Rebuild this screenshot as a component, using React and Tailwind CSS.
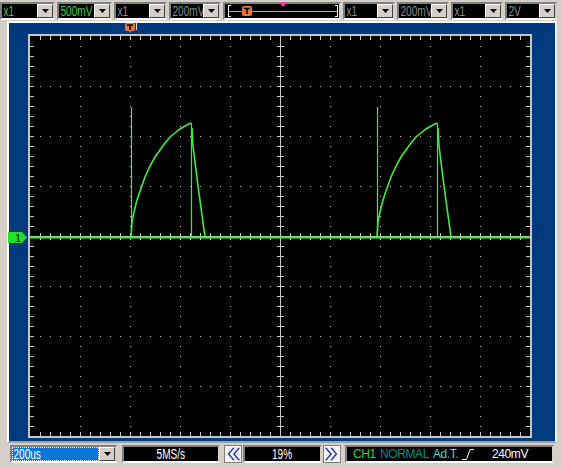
import React from 'react';

const font = { fontFamily: '"Liberation Sans", Arial, sans-serif' };

function Arrow() {
    return (
        <svg width="7" height="4" viewBox="0 0 7 4">
            <polygon points="0,0 7,0 3.5,4" fill="#000" />
        </svg>
    );
}

function Combo({ w, text, color, selected }) {
    return (
        <div
            className="h-[18px] flex border-2 border-t-[#808080] border-l-[#808080] border-b-white border-r-[#d4d0c8] bg-black shrink-0"
            style={{ width: w }}
        >
            <div className={`flex-1 flex items-center overflow-hidden ${selected ? 'bg-[#0a78d8] outline-1 outline-dotted outline-white -outline-offset-1' : ''}`}>
                <span className={`inline-block origin-left scale-x-[0.72] text-[14px] leading-none whitespace-nowrap pl-[2px] ${color}`}>
                    {text}
                </span>
            </div>
            <div className="w-[16px] h-[14px] bg-[#d4d0c8] border border-t-white border-l-white border-b-[#404040] border-r-[#404040] flex items-center justify-center">
                <Arrow />
            </div>
        </div>
    );
}

function Box({ w, children }) {
    return (
        <div
            className="h-[18px] bg-black border-2 border-t-[#808080] border-l-[#808080] border-b-white border-r-[#d4d0c8] flex items-center justify-center overflow-hidden shrink-0"
            style={{ width: w }}
        >
            {children}
        </div>
    );
}

function Narrow({ children, className = '' }) {
    return (
        <span className={`inline-block scale-x-[0.72] text-[14px] leading-none whitespace-nowrap ${className}`}>
            {children}
        </span>
    );
}

function Chevrons({ dir }) {
    const pts = dir === 'left'
        ? ['9,1 3,8 9,15 11,15 5,8 11,1', '15,1 9,8 15,15 17,15 11,8 17,1']
        : ['3,1 9,8 3,15 1,15 7,8 1,1', '9,1 15,8 9,15 7,15 13,8 7,1'];
    return (
        <div className="w-[18px] h-[18px] bg-[#f4f4f4] border border-[#808080] flex items-center justify-center shrink-0">
            <svg width="18" height="16" viewBox="0 0 18 16">
                {pts.map((p, i) => <polygon key={i} points={p} fill="#1e2c9c" />)}
            </svg>
        </div>
    );
}

function Screen() {
    const dots = [];
    [50, 100, 150, 200, 300, 350, 400, 450].forEach(x => {
        for (let y = 10; y < 400; y += 10) dots.push([x, y]);
    });
    [50, 100, 150, 250, 300, 350].forEach(y => {
        for (let x = 10; x < 500; x += 10) {
            if (x % 50 !== 0) dots.push([x, y]);
        }
    });
    const ticks = [];
    for (let x = 10; x < 500; x += 10) {
        ticks.push(`M${x + 0.5} 0v4`, `M${x + 0.5} 396v4`, `M${x + 0.5} 197v7`);
    }
    for (let y = 10; y < 400; y += 10) {
        ticks.push(`M0 ${y + 0.5}h4`, `M496 ${y + 0.5}h4`, `M247 ${y + 0.5}h7`);
    }

    const pulse = (o) => {
        const curve = [
            [101, 201], [102, 186], [104, 176], [107, 164], [110, 155], [115, 141],
            [120, 130], [125, 121], [130, 114], [135, 107], [140, 101], [145, 97],
            [150, 93], [155, 90], [161, 87],
        ].map(([x, y]) => `${x + o},${y}`).join(' ');
        return (
            <g key={o} fill="none" stroke="#3cf03c" strokeWidth="1.6">
                <path d={`M${101.5 + o} 201V71`} strokeWidth="1.2" />
                <polyline points={curve} />
                <path d={`M${161.5 + o} 87V201`} strokeWidth="1.2" />
                <polyline points={`${162 + o},92 ${163 + o},110 ${168 + o},150 ${175 + o},201`} />
            </g>
        );
    };

    return (
        <svg width="500" height="400" viewBox="0 0 500 400" className="block">
            <rect width="500" height="400" fill="#000" />
            {dots.map(([x, y], i) => (
                <rect key={i} x={x} y={y} width="1" height="1" fill="#c8c8c8" />
            ))}
            <path d="M250.5 0V400M0 200.5H500" stroke="#c8c8c8" strokeWidth="1" />
            <path d={ticks.join('')} stroke="#c8c8c8" strokeWidth="1" />
            <path d="M0 201.5H500" stroke="#3cf03c" strokeWidth="2" />
            {pulse(0)}
            {pulse(246)}
        </svg>
    );
}

function Slider() {
    return (
        <div className="w-[118px] h-[18px] bg-black border-2 border-t-[#808080] border-l-[#808080] border-b-white border-r-[#d4d0c8] shrink-0 relative overflow-visible">
            <svg width="114" height="14" viewBox="0 0 114 14" className="block">
                <path d="M3.5 1V13M3.5 1.5H6M3.5 12.5H6" stroke="#fff" />
                <path d="M4 7.5H112" stroke="#3cf03c" />
                <path d="M112.5 1V13M110 1.5H112.5M110 12.5H112.5" stroke="#fff" />
                <rect x="17" y="2" width="10" height="10" rx="2" fill="#e8743c" />
                <path d="M19 4.5H25M22 4.5V10" stroke="#000" strokeWidth="1.5" />
            </svg>
            <svg width="8" height="5" viewBox="0 0 8 5" className="absolute left-[54px] -top-[2px]">
                <polygon points="0,0 8,0 4,5" fill="#f040b0" />
            </svg>
        </div>
    );
}

export default function App() {
    const green = 'text-[#3cd23c]';
    const gray = 'text-[#8c8c8c]';
    return (
        <div className="w-[561px] h-[468px] bg-[#d4d0c8] overflow-hidden relative" style={font}>
            {/* top controls */}
            <div className="h-[21px] pt-[2px] flex gap-[2px]">
                <Combo w={55} text="x1" color={green} />
                <Combo w={55} text="500mV" color={green} />
                <Combo w={53} text="x1" color={gray} />
                <Combo w={52} text="200mV" color={gray} />
                <Slider />
                <Combo w={52} text="x1" color={gray} />
                <Combo w={52} text="200mV" color={gray} />
                <Combo w={52} text="x1" color={gray} />
                <Combo w={52} text="2V" color={gray} />
            </div>

            {/* scope frame */}
            <div className="ml-[7px] w-[550px] border-2 border-t-white border-l-white border-b-[#a0a0a0] border-r-[#f0f0f0] relative">
                <div className="bg-[#003a7c] pl-[19px] pt-[11px] pr-[23px] pb-[3px]">
                    <div className="border-2 border-[#c8c8c8] w-[504px]">
                        <Screen />
                    </div>
                </div>
                {/* trigger position marker */}
                <svg width="12" height="10" viewBox="0 0 12 10" className="absolute left-[116px] top-[0px]">
                    <path d="M0 1.5Q0 0 1.5 0H8.5Q10 0 10 1.5V6.5Q10 8 8.5 8H6L5 10L4 8H1.5Q0 8 0 6.5Z" fill="#e8743c" />
                    <path d="M2 2H8M5 2V7" stroke="#000" strokeWidth="1.6" />
                    <path d="M11.5 0V7" stroke="#e0e0e0" />
                </svg>
                {/* channel 1 level marker */}
                <svg width="20" height="11" viewBox="0 0 20 11" className="absolute left-[-1px] top-[209px]">
                    <polygon points="0,0 14,0 19,5.5 14,11 0,11" fill="#22e022" />
                    <text x="7" y="10" fontSize="11" fontFamily="Liberation Sans, Arial, sans-serif" fill="#000">1</text>
                </svg>
            </div>

            {/* bottom controls */}
            <div className="pt-[2px] pl-[10px] flex items-center">
                <Combo w={107} text="200us" color="text-white" selected />
                <div className="w-[5px]" />
                <Box w={98}><Narrow className="text-white">5MS/s</Narrow></Box>
                <div className="w-[4px]" />
                <Chevrons dir="left" />
                <div className="w-[1px]" />
                <Box w={79}><Narrow className="text-white">19%</Narrow></Box>
                <div className="w-[1px]" />
                <Chevrons dir="right" />
                <div className="w-[4px]" />
                <div className="w-[209px] h-[18px] bg-black border-2 border-t-[#808080] border-l-[#808080] border-b-white border-r-[#d4d0c8] flex items-center text-[12px] tracking-[-0.4px] leading-none whitespace-nowrap">
                    <span className="ml-[6px] w-[27px] text-[#3cd23c]">CH1</span>
                    <span className="w-[53px] text-[#0a8c8c]">NORMAL</span>
                    <span className="w-[28px] text-[#40d8d8]">Ad.T.</span>
                    <span className="w-[31px] flex">
                        <svg width="14" height="12" viewBox="0 0 14 12">
                            <path d="M1 11.5H5.5L9 1.5H13" fill="none" stroke="#fff" />
                        </svg>
                    </span>
                    <span className="text-white">240mV</span>
                </div>
            </div>
        </div>
    );
}
